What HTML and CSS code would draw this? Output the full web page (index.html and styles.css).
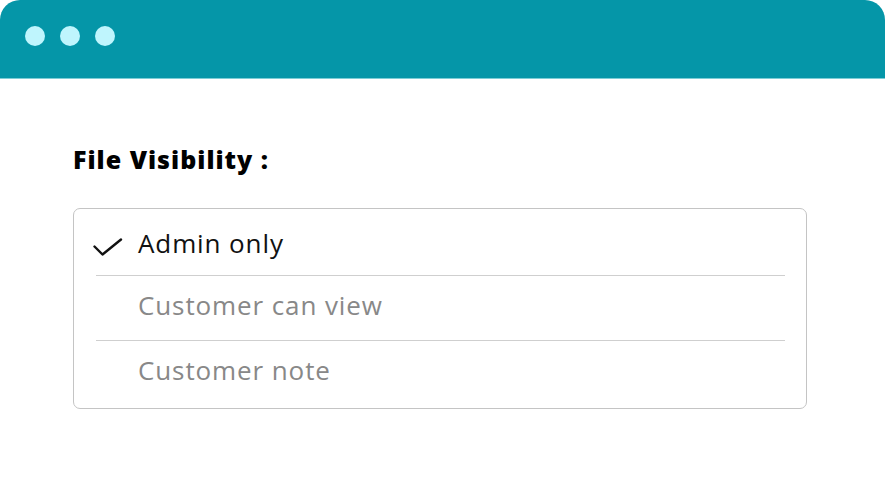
FILE: index.html
```html
<!DOCTYPE html>
<html>
<head>
<meta charset="utf-8">
<link rel="stylesheet" href="styles.css">
</head>
<body>
<div class="window">
  <div class="titlebar">
    <span class="dot"></span><span class="dot"></span><span class="dot"></span>
  </div>
  <div class="content">
    <h1 class="label">File Visibility :</h1>
    <div class="select">
      <div class="option selected">
        <svg class="check" width="31" height="20" viewBox="0 0 31 20"><path d="M1.5 8.5 L9.5 16.5 L28 1.5" fill="none" stroke="#111" stroke-width="2.4" stroke-linecap="round" stroke-linejoin="round"/></svg>
        <span>Admin only</span>
      </div>
      <div class="option"><span>Customer can view</span></div>
      <div class="option"><span>Customer note</span></div>
    </div>
  </div>
</div>
</body>
</html>
```
FILE: styles.css
```css
html, body { margin: 0; padding: 0; background: #fff; }
body { font-family: "Open Sans", "Noto Sans", sans-serif; }
.window { width: 885px; height: 485px; background: #fff; }
.titlebar {
  height: 79px;
  background: #0596a8;
  border-radius: 20px 20px 0 0;
  border-bottom: 1px solid #7dcdd6;
  display: flex;
  align-items: center;
  gap: 15px;
  padding-left: 25px;
  box-sizing: border-box;
  padding-bottom: 6px;
}
.dot { width: 20px; height: 20px; border-radius: 50%; background: #bff5fd; }
.content { padding: 63px 0 0 73px; }
.label {
  margin: 0;
  font-size: 25px;
  font-weight: 800;
  letter-spacing: 1px;
  color: #000;
  line-height: 34px;
}
.select {
  margin-top: 32px;
  width: 734px;
  height: 201px;
  box-sizing: border-box;
  border: 1px solid #c4c4c4;
  border-radius: 7px;
  padding: 0 21px 0 22px;
  display: flex;
  flex-direction: column;
}
.option {
  height: 65px;
  display: flex;
  align-items: flex-start;
  padding: 11px 0 0 42px;
  font-size: 26px;
  line-height: 36px;
  letter-spacing: 0.9px;
  color: #888;
  position: relative;
  box-sizing: border-box;
}
.option.selected { height: 66px; padding-top: 16px; color: #111; }
.option + .option { border-top: 1px solid #cfcfcf; }
.option:last-child { flex: 1; }
.check { position: absolute; left: -3px; top: 29px; overflow: visible; }
```
